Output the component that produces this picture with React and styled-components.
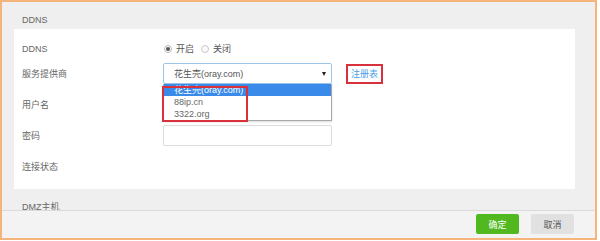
import React from "react";
import styled, { createGlobalStyle } from "styled-components";

const Global = createGlobalStyle`
  html, body { margin: 0; padding: 0; background: #ffffff; }
  body { font-family: "Liberation Sans", "Noto Sans CJK SC", sans-serif; }
  * { box-sizing: border-box; }
`;

const Frame = styled.div`
  position: relative;
  width: 597px;
  height: 240px;
  border: 2px solid #f4b47c;
  background: #efefef;
  overflow: hidden;
  font-size: 9px;
  color: #666;
`;

const SectionTitle = styled.div`
  padding: ${(p) => p.$pt}px 0 0 20px;
  height: ${(p) => p.$h}px;
  line-height: 12px;
  color: #666;
`;

const Card = styled.div`
  margin-left: 12px;
  width: 561px;
  height: 160px;
  background: #ffffff;
  padding: 9px 0 0 8px;
  display: flex;
  flex-direction: column;
`;

const Row = styled.div`
  display: flex;
  align-items: center;
  height: 21px;
  margin-top: ${(p) => p.$mt || 0}px;
`;

const Label = styled.div`
  width: 141px;
  flex: none;
  color: #666;
`;

const RadioGroup = styled.div`
  display: flex;
  align-items: center;
  gap: 7px;
  padding-left: 1px;
`;

const RadioItem = styled.label`
  display: flex;
  align-items: center;
  gap: 4px;
  color: #555;
`;

const RadioDot = styled.span`
  width: 8px;
  height: 8px;
  border-radius: 50%;
  border: 1px solid ${(p) => (p.$on ? "#bbb" : "#c8c8c8")};
  background: #fafafa;
  display: flex;
  align-items: center;
  justify-content: center;
  &::after {
    content: "";
    width: 4px;
    height: 4px;
    border-radius: 50%;
    background: ${(p) => (p.$on ? "#555" : "transparent")};
  }
`;

const SelectWrap = styled.div`
  position: relative;
  width: 169px;
  height: 21px;
`;

const SelectBox = styled.div`
  width: 100%;
  height: 100%;
  border: 1px solid #9cc3ea;
  border-radius: 2px;
  background: #fff;
  display: flex;
  align-items: center;
  justify-content: space-between;
  padding: 0 4px 0 10px;
  color: #555;
`;

const Arrow = styled.span`
  width: 0;
  height: 0;
  border-left: 2.5px solid transparent;
  border-right: 2.5px solid transparent;
  border-top: 4px solid #222;
  margin-right: 1px;
`;

const Dropdown = styled.div`
  position: absolute;
  left: 0;
  top: 21px;
  width: 169px;
  border: 1px solid #a8a8a8;
  border-top: none;
  background: #fff;
  z-index: 3;
  box-shadow: 0 1px 2px rgba(0, 0, 0, 0.15);
`;

const Option = styled.div`
  height: 12px;
  line-height: 12px;
  padding-left: 10px;
  background: ${(p) => (p.$active ? "#3a8be9" : "#fff")};
  color: ${(p) => (p.$active ? "#fff" : "#666")};
`;

const Annotation = styled.div`
  position: absolute;
  left: -1px;
  top: 23px;
  width: 86px;
  height: 36px;
  border: 2px solid #d8313b;
  z-index: 4;
  pointer-events: none;
`;

const LinkBox = styled.a`
  margin-left: 14px;
  height: 20px;
  border: 2px solid #d8313b;
  padding: 0 3px;
  display: flex;
  align-items: center;
  color: #4a9ee8;
  text-decoration: none;
`;

const Input = styled.div`
  width: 169px;
  height: 21px;
  border: 1px solid #dcdcdc;
  border-radius: 2px;
  background: #fff;
`;

const Footer = styled.div`
  position: absolute;
  left: 0;
  right: 0;
  bottom: 0;
  height: 28px;
  border-top: 1px solid #dadada;
  background: #f3f3f3;
  display: flex;
  justify-content: flex-end;
  align-items: center;
  gap: 12px;
  padding: 0 21px 1px 0;
`;

const Button = styled.button`
  width: 43px;
  height: 20px;
  border: none;
  border-radius: 2px;
  font-family: inherit;
  font-size: 9px;
  padding: 0;
  background: ${(p) => (p.$primary ? "#52b820" : "#e1e1e1")};
  color: ${(p) => (p.$primary ? "#fff" : "#555")};
`;

export default function App() {
  return (
    <>
      <Global />
      <Frame>
        <SectionTitle $pt={12} $h={27}>DDNS</SectionTitle>
        <Card>
          <Row>
            <Label>DDNS</Label>
            <RadioGroup>
              <RadioItem>
                <RadioDot $on />
                开启
              </RadioItem>
              <RadioItem>
                <RadioDot />
                关闭
              </RadioItem>
            </RadioGroup>
          </Row>
          <Row $mt={4}>
            <Label>服务提供商</Label>
            <SelectWrap>
              <SelectBox>
                <span>花生壳(oray.com)</span>
                <Arrow />
              </SelectBox>
              <Dropdown>
                <Option $active>花生壳(oray.com)</Option>
                <Option>88ip.cn</Option>
                <Option>3322.org</Option>
              </Dropdown>
              <Annotation />
            </SelectWrap>
            <LinkBox>注册表</LinkBox>
          </Row>
          <Row $mt={10}>
            <Label>用户名</Label>
            <Input />
          </Row>
          <Row $mt={10}>
            <Label>密码</Label>
            <Input />
          </Row>
          <Row $mt={10}>
            <Label>连接状态</Label>
          </Row>
        </Card>
        <SectionTitle $pt={12} $h={30}>DMZ主机</SectionTitle>
        <Footer>
          <Button $primary>确定</Button>
          <Button>取消</Button>
        </Footer>
      </Frame>
    </>
  );
}
